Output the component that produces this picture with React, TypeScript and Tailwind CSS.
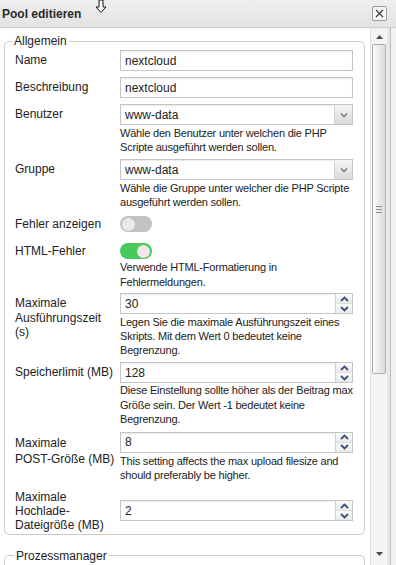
import React from 'react';

type RowProps = {
  label: React.ReactNode;
  className?: string;
  labelClass?: string;
  children: React.ReactNode;
};

function Row({ label, className = '', labelClass = 'pt-[3px] leading-[15px]', children }: RowProps) {
  return (
    <div className={`flex ${className}`}>
      <div className={`w-[105px] shrink-0 whitespace-nowrap ${labelClass}`}>{label}</div>
      <div className="w-[233px] shrink-0">{children}</div>
    </div>
  );
}

function Help({ className = 'mt-[1px] leading-[14px]', children }: { className?: string; children: React.ReactNode }) {
  return <div className={`whitespace-nowrap text-[11px] tracking-[-0.2px] text-[#222] ${className}`}>{children}</div>;
}

function TextField({ value }: { value: string }) {
  return (
    <div className="flex h-[21px] items-center border border-[#c5c5c5] bg-white pl-[4px] shadow-[inset_0_1px_1px_#ececec]">
      {value}
    </div>
  );
}

function SelectField({ value }: { value: string }) {
  return (
    <div className="flex h-[21px] border border-[#c5c5c5] bg-white">
      <div className="flex flex-1 items-center pl-[4px] shadow-[inset_0_1px_1px_#ececec]">{value}</div>
      <div className="flex w-[18px] items-center justify-center border-l border-[#d2d2d2] bg-gradient-to-b from-[#f6f6f6] to-[#dadada]">
        <svg width="8" height="6" viewBox="0 0 8 6">
          <path d="M1 1.5 L4 4.5 L7 1.5" stroke="#7a7f8a" strokeWidth="1.6" fill="none" />
        </svg>
      </div>
    </div>
  );
}

function NumberField({ value }: { value: string }) {
  return (
    <div className="flex h-[21px] border border-[#c5c5c5] bg-white">
      <div className="flex flex-1 items-center pl-[4px] shadow-[inset_0_1px_1px_#ececec]">{value}</div>
      <div className="flex w-[17px] flex-col border-l border-[#d2d2d2]">
        <div className="flex flex-1 items-center justify-center border-b border-[#dedede] bg-gradient-to-b from-[#fbfbfb] to-[#eaeaea]">
          <svg width="9" height="6" viewBox="0 0 9 6">
            <path d="M1 5 L4.5 1.5 L8 5" stroke="#3c5078" strokeWidth="1.8" fill="none" />
          </svg>
        </div>
        <div className="flex flex-1 items-center justify-center bg-gradient-to-b from-[#fbfbfb] to-[#eaeaea]">
          <svg width="9" height="6" viewBox="0 0 9 6">
            <path d="M1 1 L4.5 4.5 L8 1" stroke="#3c5078" strokeWidth="1.8" fill="none" />
          </svg>
        </div>
      </div>
    </div>
  );
}

function Toggle({ on }: { on: boolean }) {
  return (
    <div
      className={
        on
          ? 'flex h-[16px] w-[32px] items-center justify-end rounded-full bg-[#47c95c] px-[2px]'
          : 'flex h-[16px] w-[32px] items-center justify-start rounded-full bg-[#c2c2c2] px-[2px]'
      }
    >
      <div className={on ? 'h-[13px] w-[13px] rounded-full bg-[#efe7ea]' : 'h-[13px] w-[13px] rounded-full bg-[#eaeaea]'} />
    </div>
  );
}

function Scrollbar() {
  return (
    <div className="flex w-[17px] flex-col border-l border-[#e2e2e2] bg-[#f3f3f3]">
      <div className="flex h-[16px] items-center justify-center pt-[2px]">
        <svg width="7" height="4" viewBox="0 0 7 4">
          <path d="M0 4 L3.5 0 L7 4 Z" fill="#4a4a4a" />
        </svg>
      </div>
      <div className="ml-[1px] flex h-[330px] w-[14px] items-center justify-center rounded-[2px] border border-[#adadad] bg-gradient-to-r from-[#fbfbfb] to-[#dcdcdc]">
        <div className="flex flex-col gap-[2px]">
          <div className="h-px w-[6px] bg-[#8a8a8a]" />
          <div className="h-px w-[6px] bg-[#8a8a8a]" />
          <div className="h-px w-[6px] bg-[#8a8a8a]" />
        </div>
      </div>
      <div className="flex-1" />
      <div className="flex h-[16px] items-start justify-center pt-[3px]">
        <svg width="7" height="4" viewBox="0 0 7 4">
          <path d="M0 0 L3.5 4 L7 0 Z" fill="#4a4a4a" />
        </svg>
      </div>
    </div>
  );
}

export default function App() {
  return (
    <div className="relative flex h-[565px] w-[396px] flex-col overflow-hidden bg-[#f0f0f0] font-['Liberation_Sans',Arial,sans-serif] text-[12px] text-[#222]">
      {/* title bar */}
      <div className="flex h-[28px] shrink-0 items-center border-b border-[#d0d0d0] bg-gradient-to-b from-[#efefef] to-[#e3e3e3] pl-[2px]">
        <span className="font-bold text-[#2a2a2a]">Pool editieren</span>
        <div className="ml-auto mr-[9px] flex h-[15px] w-[15px] items-center justify-center rounded-[2px] border border-[#9d9d9d] bg-[#f5f5f5]">
          <svg width="9" height="9" viewBox="0 0 9 9">
            <path d="M1 1 L8 8 M8 1 L1 8" stroke="#3a3a3a" strokeWidth="1.2" />
          </svg>
        </div>
      </div>

      {/* mouse cursor */}
      <svg className="absolute left-[95px] top-0" width="12" height="14" viewBox="0 0 12 14">
        <path d="M4 0 H8 V7 H11 L6 12.5 L1 7 H4 Z" fill="#fff" stroke="#111" strokeWidth="1" />
      </svg>

      <div className="flex min-h-0 flex-1">
        <div className="w-[370px] shrink-0 overflow-hidden bg-white pl-[4px] pr-[5px] pt-[6px]">
          <fieldset className="rounded-[5px] border border-[#cacaca] pb-[2px] pl-[10px] pr-[10px] pt-[2px]">
            <legend className="ml-[-3px] px-[2px] leading-[14px]">Allgemein</legend>

            <Row label="Name">
              <TextField value="nextcloud" />
            </Row>
            <Row label="Beschreibung" className="mt-[6px]">
              <TextField value="nextcloud" />
            </Row>
            <Row label="Benutzer" className="mt-[6px]">
              <SelectField value="www-data" />
              <Help>
                Wähle den Benutzer unter welchen die PHP
                <br />
                Scripte ausgeführt werden sollen.
              </Help>
            </Row>
            <Row label="Gruppe" className="mt-[5px]">
              <SelectField value="www-data" />
              <Help>
                Wähle die Gruppe unter welcher die PHP Scripte
                <br />
                ausgeführt werden sollen.
              </Help>
            </Row>
            <Row label="Fehler anzeigen" className="mt-[6px]" labelClass="pt-[2px] leading-[15px]">
              <div className="flex h-[18px] items-center">
                <Toggle on={false} />
              </div>
            </Row>
            <Row label="HTML-Fehler" className="mt-[9px]" labelClass="pt-[2px] leading-[15px]">
              <div className="flex h-[18px] items-center">
                <Toggle on={true} />
              </div>
              <Help className="leading-[15px]">
                Verwende HTML-Formatierung in
                <br />
                Fehlermeldungen.
              </Help>
            </Row>
            <Row
              label={
                <>
                  Maximale
                  <br />
                  Ausführungszeit
                  <br />
                  (s)
                </>
              }
              className="mt-[3px]"
              labelClass="pt-[3px] leading-[14.5px]"
            >
              <NumberField value="30" />
              <Help>
                Legen Sie die maximale Ausführungszeit eines
                <br />
                Skripts. Mit dem Wert 0 bedeutet keine
                <br />
                Begrenzung.
              </Help>
            </Row>
            <Row label="Speicherlimit (MB)" className="mt-[5px]">
              <NumberField value="128" />
              <Help className="leading-[14.5px]">
                Diese Einstellung sollte höher als der Beitrag max
                <br />
                Größe sein. Der Wert -1 bedeutet keine
                <br />
                Begrenzung.
              </Help>
            </Row>
            <Row
              label={
                <>
                  Maximale
                  <br />
                  POST-Größe (MB)
                </>
              }
              className="mt-[5px]"
              labelClass="pt-[3px] leading-[16px]"
            >
              <NumberField value="8" />
              <Help>
                This setting affects the max upload filesize and
                <br />
                should preferably be higher.
              </Help>
            </Row>
            <Row
              label={
                <>
                  Maximale
                  <br />
                  Hochlade-
                  <br />
                  Dateigröße (MB)
                </>
              }
              className="mt-[8px] items-center"
              labelClass="leading-[14px]"
            >
              <NumberField value="2" />
            </Row>
          </fieldset>

          <fieldset className="mt-[14px] h-[60px] rounded-[5px] border border-[#cacaca] pl-[10px]">
            <legend className="ml-[-1px] px-[2px] leading-[14px]">Prozessmanager</legend>
          </fieldset>
        </div>

        <Scrollbar />
        <div className="w-[3px] shrink-0 bg-[#e6e6e6]" />
        <div className="w-[6px] shrink-0 border-l border-[#bdbdbd] bg-[#f2f2f2]" />
      </div>
    </div>
  );
}
